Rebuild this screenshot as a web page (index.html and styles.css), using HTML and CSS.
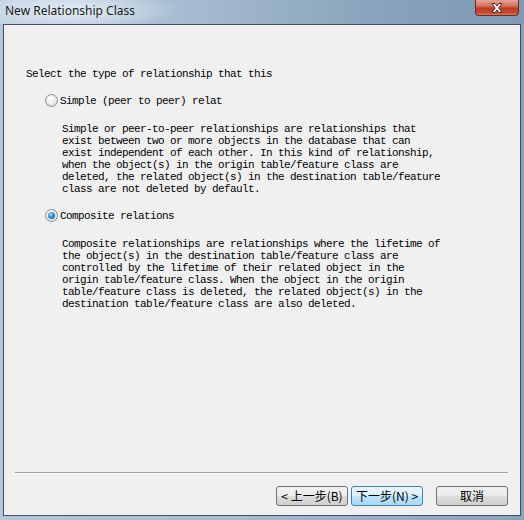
FILE: index.html
```html
<!DOCTYPE html>
<html lang="en">
<head>
    <meta charset="UTF-8">
    <title>New Relationship Class</title>
    <link rel="stylesheet" href="styles.css">
</head>
<body>
    <div class="window">
        <div class="titlebar">
            <span class="title">New Relationship Class</span>
            <span class="close-btn">
                <svg width="16" height="12" viewBox="0 0 16 12">
                    <path d="M3 1.5 L6 1.5 L8 4 L10 1.5 L13 1.5 L9.8 6 L13 10.5 L10 10.5 L8 8 L6 10.5 L3 10.5 L6.2 6 Z" fill="#ffffff" stroke="#4a2a2a" stroke-width="1" stroke-linejoin="round"/>
                </svg>
            </span>
        </div>

        <div class="client">
            <div class="page">
                <p class="prompt">Select the type of relationship that this</p>

                <div class="option">
                    <span class="radio"></span>
                    <span class="option-label">Simple (peer to peer) relat</span>
                </div>
                <p class="desc">Simple or peer-to-peer relationships are relationships that<br>exist between two or more objects in the database that can<br>exist independent of each other. In this kind of relationship,<br>when the object(s) in the origin table/feature class are<br>deleted, the related object(s) in the destination table/feature<br>class are not deleted by default.</p>

                <div class="option">
                    <span class="radio checked"></span>
                    <span class="option-label">Composite relations</span>
                </div>
                <p class="desc">Composite relationships are relationships where the lifetime of<br>the object(s) in the destination table/feature class are<br>controlled by the lifetime of their related object in the<br>origin table/feature class. When the object in the origin<br>table/feature class is deleted, the related object(s) in the<br>destination table/feature class are also deleted.</p>
            </div>

            <div class="separator"></div>

            <div class="buttons">
                <button class="btn">&lt; 上一步(B)</button>
                <button class="btn btn-focus">下一步(N) &gt;</button>
                <button class="btn btn-cancel">取消</button>
            </div>
        </div>
    </div>
</body>
</html>
```

FILE: styles.css
```css
/* Window frame */
body {
    margin: 0;
    background-color: #9fb6cc;
}

.window {
    width: 524px;
    height: 520px;
    display: flex;
    flex-direction: column;
    background: linear-gradient(to right, #b3c7da 0%, #a6bcd1 45%, #88a3bc 100%);
}

.titlebar {
    height: 24px;
    flex-shrink: 0;
    display: flex;
    align-items: flex-start;
    justify-content: space-between;
    background:
        radial-gradient(ellipse 110px 22px at 70px 10px, rgba(235, 242, 249, 0.9), rgba(235, 242, 249, 0) 100%),
        linear-gradient(to right, #bccee0 0%, #a3b9ce 40%, #86a1ba 75%, #7f9bb5 100%);
}

.title {
    margin: 3px 0 0 5px;
    font-family: "Noto Sans", "Open Sans", sans-serif;
    font-size: 12px;
    line-height: 16px;
    color: #1a1a1a;
}

.close-btn {
    width: 44px;
    height: 16px;
    margin-right: 5px;
    display: flex;
    align-items: center;
    justify-content: center;
    box-sizing: border-box;
    border: 1px solid #6b2b22;
    border-top: none;
    border-radius: 0 0 4px 4px;
    background: linear-gradient(to bottom, #e8a597 0%, #d26f5c 40%, #c03a22 55%, #c64a30 85%, #dc7d5c 100%);
}

/* Client area */
.client {
    flex: 1;
    margin: 0 3px 4px 3px;
    display: flex;
    flex-direction: column;
    border: 1px solid #3f4f60;
    background-color: #f0f0f0;
    font-family: "Liberation Mono", monospace;
    font-size: 11px;
    letter-spacing: -0.6px;
    line-height: 12px;
    color: #000;
}

.page {
    flex: 1;
}

.prompt {
    margin: 43px 0 0 22px;
}

.option {
    display: flex;
    align-items: center;
    height: 13px;
    margin: 14px 0 0 41px;
}

.option-label {
    margin-left: 2px;
}

.radio {
    width: 13px;
    height: 13px;
    box-sizing: border-box;
    border-radius: 50%;
    border: 1px solid #8e8f8f;
    background: radial-gradient(circle at 40% 35%, #ffffff 0%, #ececec 45%, #cfcfcf 100%);
    position: relative;
}

.radio.checked::after {
    content: "";
    position: absolute;
    left: 2px;
    top: 2px;
    width: 7px;
    height: 7px;
    border-radius: 50%;
    background: radial-gradient(circle at 40% 35%, #a6e0ff 0%, #2f8ee0 45%, #0d4f9c 100%);
}

.desc {
    margin: 16px 0 0 58px;
}

/* Bottom rule and buttons */
.separator {
    height: 1px;
    margin: 0 12px 0 11px;
    background-color: #a0a0a0;
    border-bottom: 1px solid #ffffff;
}

.buttons {
    display: flex;
    justify-content: flex-end;
    margin-top: 12px;
    padding: 0 12px 9px 0;
}

.btn {
    width: 72px;
    height: 20px;
    margin: 0 0 0 3px;
    padding: 0;
    box-sizing: border-box;
    border: 1px solid #707070;
    border-radius: 3px;
    background: linear-gradient(to bottom, #f2f2f2 0%, #ebebeb 50%, #dddddd 51%, #cfcfcf 100%);
    font-family: "Noto Sans CJK SC", sans-serif;
    font-size: 12px;
    line-height: 16px;
    color: #000;
}

.btn-focus {
    border-color: #3c7fb1;
    background: linear-gradient(to bottom, #eaf6fd 0%, #d9f0fc 50%, #bee6fd 51%, #a7d9f5 100%);
}

.btn-cancel {
    margin-left: 13px;
}
```
